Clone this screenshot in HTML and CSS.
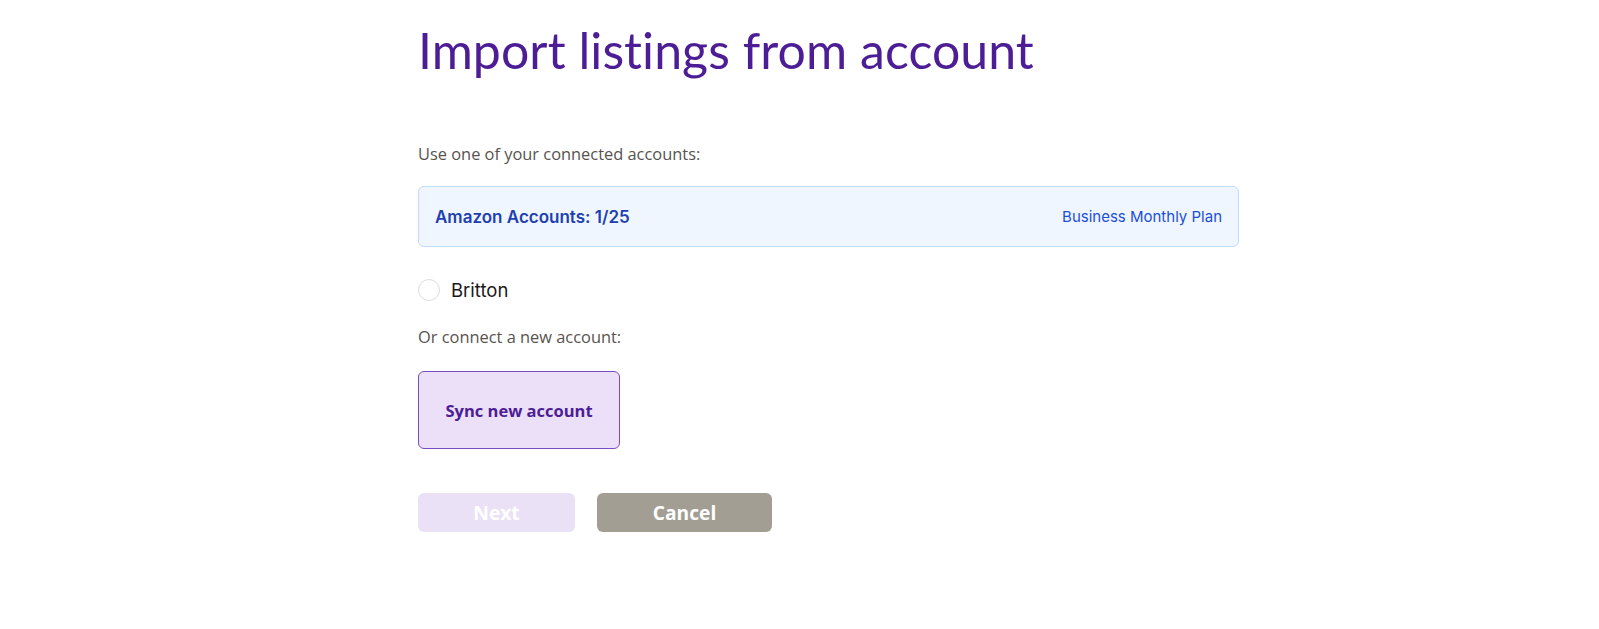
FILE: index.html
```html
<!DOCTYPE html>
<html lang="en">
<head>
    <meta charset="UTF-8">
    <meta name="viewport" content="width=device-width, initial-scale=1.0">
    <title>Import listings</title>
    <link rel="stylesheet" href="styles.css">
</head>
<body>
    <div class="container">
        <h1>Import listings from account</h1>

        <p class="label label-first">Use one of your connected accounts:</p>

        <div class="plan-box">
            <span class="plan-count">Amazon Accounts: 1/25</span>
            <span class="plan-name">Business Monthly Plan</span>
        </div>

        <label class="account-option">
            <span class="radio"></span>
            <span class="account-name">Britton</span>
        </label>

        <p class="label">Or connect a new account:</p>

        <button class="sync-btn">Sync new account</button>

        <div class="actions">
            <button class="next-btn" disabled>Next</button>
            <button class="cancel-btn">Cancel</button>
        </div>
    </div>
</body>
</html>
```

FILE: styles.css
```css
* {
    margin: 0;
    padding: 0;
    box-sizing: border-box;
}

body {
    font-family: 'Open Sans', sans-serif;
    background: #ffffff;
    color: #57534e;
}

.container {
    width: 821px;
    margin-left: 418px;
    padding-top: 22px;
}

h1 {
    font-family: 'Lato', sans-serif;
    font-weight: 400;
    font-size: 50px;
    line-height: 56px;
    color: #4c1d95;
    letter-spacing: 0.06px;
}

.label {
    font-size: 16.4px;
    line-height: 24px;
    color: #57534e;
}

.label-first {
    margin-top: 64px;
}

.plan-box {
    margin-top: 20px;
    height: 61px;
    padding: 0 16px;
    display: flex;
    align-items: center;
    justify-content: space-between;
    background: #eff6ff;
    border: 1px solid #bfdbfe;
    border-radius: 6px;
    font-family: 'Inter', sans-serif;
}

.plan-count {
    font-size: 17px;
    font-weight: 600;
    color: #1e40af;
}

.plan-name {
    font-size: 15px;
    color: #1d4ed8;
}

.account-option {
    margin-top: 32px;
    display: flex;
    align-items: center;
    gap: 11px;
    cursor: pointer;
}

.radio {
    width: 22px;
    height: 22px;
    border: 1px solid #dedbe6;
    border-radius: 50%;
    background: #fff;
}

.account-name {
    font-family: 'Inter', sans-serif;
    font-size: 18.5px;
    line-height: 22px;
    color: #1c1917;
}

.account-option + .label {
    margin-top: 24px;
}

.sync-btn {
    margin-top: 22px;
    width: 202px;
    height: 78px;
    background: #ebe0f7;
    border: 1px solid #7a4cc4;
    border-radius: 6px;
    font-family: 'Open Sans', sans-serif;
    font-size: 16.5px;
    font-weight: 700;
    color: #4c1d95;
    cursor: pointer;
}

.actions {
    margin-top: 44px;
    display: flex;
    gap: 22px;
}

.next-btn,
.cancel-btn {
    height: 39px;
    border: none;
    border-radius: 6px;
    font-family: 'Open Sans', sans-serif;
    font-size: 19.2px;
    font-weight: 700;
    color: #ffffff;
    cursor: pointer;
}

.next-btn {
    width: 157px;
    background: #ebe1f6;
    cursor: not-allowed;
}

.cancel-btn {
    width: 175px;
    background: #a39e94;
}
```
